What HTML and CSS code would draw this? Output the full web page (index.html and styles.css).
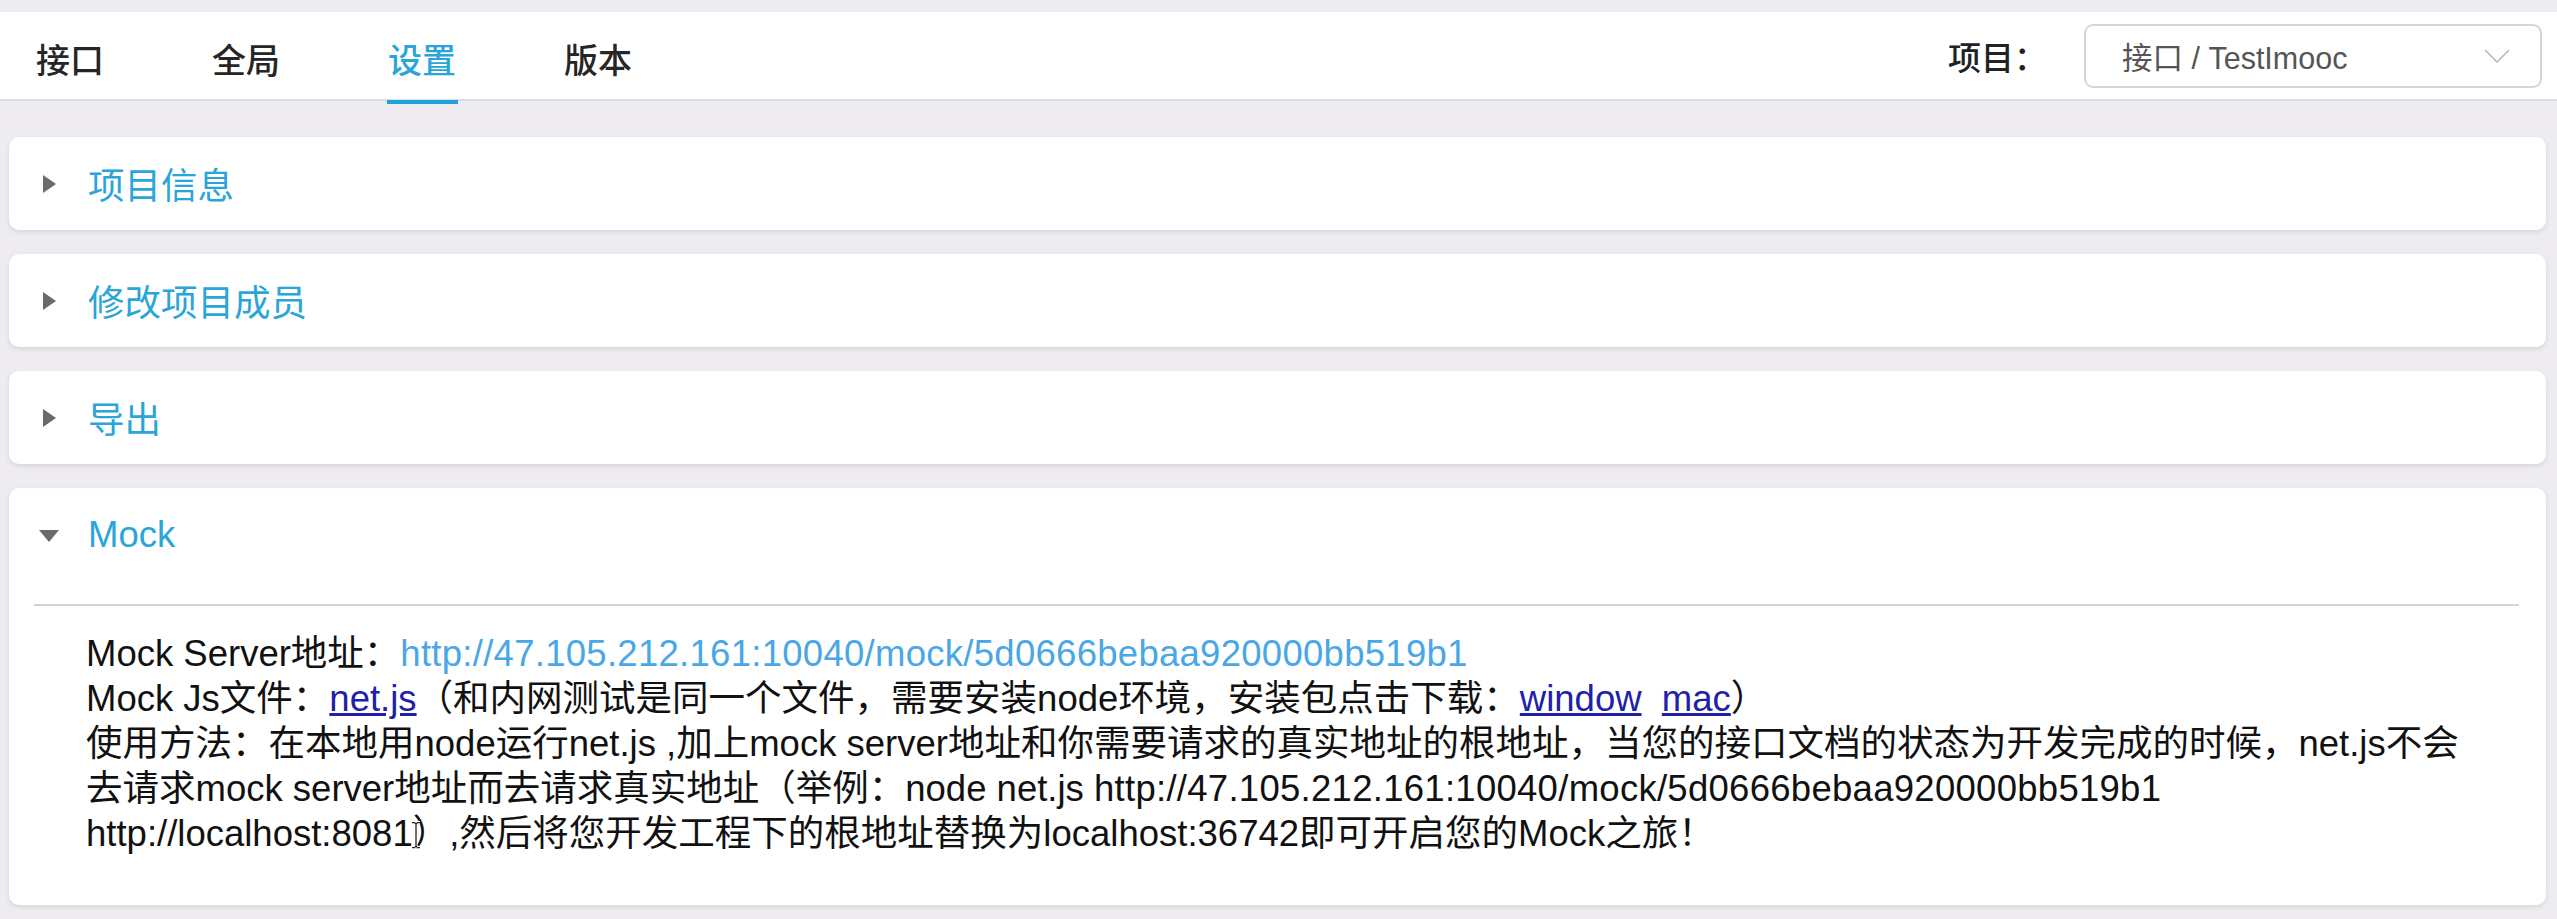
FILE: index.html
```html
<!DOCTYPE html>
<html lang="zh-CN">
<head>
<meta charset="utf-8">
<title>设置</title>
<link rel="stylesheet" href="styles.css">
</head>
<body>
<header class="topbar">
  <nav class="tabs">
    <a class="tab">接口</a>
    <a class="tab">全局</a>
    <a class="tab active">设置</a>
    <a class="tab">版本</a>
  </nav>
  <div class="project">
    <span class="project-label">项目：</span>
    <div class="select">
      <span class="select-value">接口 / TestImooc</span>
      <svg class="chevron" width="26" height="14" viewBox="0 0 26 14"><polyline points="1,1 13,13 25,1" fill="none" stroke="#b9b9bd" stroke-width="1.6"/></svg>
    </div>
  </div>
</header>
<main class="panels">
  <section class="panel">
    <div class="panel-head"><span class="arrow-box"><span class="arrow"></span></span><span class="panel-title">项目信息</span></div>
  </section>
  <section class="panel">
    <div class="panel-head"><span class="arrow-box"><span class="arrow"></span></span><span class="panel-title">修改项目成员</span></div>
  </section>
  <section class="panel">
    <div class="panel-head"><span class="arrow-box"><span class="arrow"></span></span><span class="panel-title">导出</span></div>
  </section>
  <section class="panel open">
    <div class="panel-head"><span class="arrow-box"><span class="arrow"></span></span><span class="panel-title">Mock</span></div>
    <div class="panel-body">
      <p class="mock-text">Mock Server地址：<span class="mock-url">http://47.105.212.161:10040/mock/5d0666bebaa920000bb519b1</span></p>
      <p class="mock-text">Mock Js文件：<a class="link">net.js</a>（和内网测试是同一个文件，需要安装node环境，安装包点击下载：<a class="link">window</a>&nbsp; <a class="link">mac</a>）</p>
      <p class="mock-text">使用方法：在本地用node运行net.js ,加上mock server地址和你需要请求的真实地址的根地址，当您的接口文档的状态为开发完成的时候，net.js不会<br>去请求mock server地址而去请求真实地址（举例：node net.js <span class="url-text">http://47.105.212.161:10040/mock/5d0666bebaa920000bb519b1</span><br>http://localhost:8081<span class="cursor-host">）<svg class="ibeam" width="12" height="28" viewBox="0 0 12 28"><path d="M2 1.5 H4.5 L6 3 L7.5 1.5 H10 M6 3 V25 M2 26.5 H4.5 L6 25 L7.5 26.5 H10" fill="none" stroke="#ffffff" stroke-width="3"/><path d="M2 1.5 H4.5 L6 3 L7.5 1.5 H10 M6 3 V25 M2 26.5 H4.5 L6 25 L7.5 26.5 H10" fill="none" stroke="#222222" stroke-width="1.3"/></svg></span>,然后将您开发工程下的根地址替换为localhost:36742即可开启您的Mock之旅！</p>
    </div>
  </section>
</main>
</body>
</html>
```

FILE: styles.css
```css
html, body {
  margin: 0;
}

body {
  background: #eeecf0;
  padding-top: 12px;
  height: 919px;
  box-sizing: border-box;
  overflow: hidden;
  font-family: "Liberation Sans", "Noto Sans CJK SC", sans-serif;
}

.topbar {
  height: 87px;
  background: #ffffff;
  border-bottom: 2px solid #dcdce3;
  display: flex;
  justify-content: space-between;
  align-items: stretch;
  padding: 0 15px 0 36px;
}

.tabs {
  display: flex;
  gap: 108px;
}

.tab {
  position: relative;
  display: flex;
  align-items: center;
  padding-top: 5px;
  font-size: 34px;
  font-weight: 500;
  color: #262626;
  text-decoration: none;
}

.tab.active {
  color: #2aa5d8;
}

.tab.active::after {
  content: "";
  position: absolute;
  left: -1px;
  right: -2px;
  bottom: -5px;
  height: 4px;
  background: #1fa2d9;
}

.project {
  display: flex;
  align-items: center;
  gap: 37px;
}

.project-label {
  font-size: 33px;
  font-weight: 500;
  color: #222222;
}

.select {
  width: 458px;
  height: 64px;
  box-sizing: border-box;
  border: 2px solid #d6d6da;
  border-radius: 9px;
  display: flex;
  align-items: center;
  justify-content: space-between;
  padding: 0 30px 0 36px;
  font-size: 30.5px;
  color: #555555;
}

.chevron {
  display: block;
}

.panels {
  display: flex;
  flex-direction: column;
  gap: 24px;
  padding: 36px 11px 0 9px;
}

.panel {
  background: #ffffff;
  border-radius: 10px;
  box-shadow: 0 2px 5px rgba(0, 0, 0, 0.1);
}

.panel-head {
  height: 93px;
  display: flex;
  align-items: center;
  padding-left: 29px;
  gap: 28px;
}

.arrow-box {
  width: 22px;
  height: 20px;
  display: flex;
  align-items: center;
  justify-content: center;
}

.arrow {
  width: 0;
  height: 0;
  border-left: 13px solid #6a6a6a;
  border-top: 9px solid transparent;
  border-bottom: 9px solid transparent;
}

.panel.open .arrow {
  border-left: 10px solid transparent;
  border-right: 10px solid transparent;
  border-top: 12px solid #6a6a6a;
  border-bottom: 0;
  margin-top: 2px;
}

.panel-title {
  font-size: 36.5px;
  color: #2aa5d8;
}

.panel-body {
  margin: 23px 27px 0 25px;
  border-top: 2px solid #d3d3d6;
  padding: 25px 0 49px 52px;
}

.mock-text {
  margin: 0;
  font-size: 36.5px;
  line-height: 45px;
  color: #111111;
  white-space: nowrap;
}

.mock-url {
  color: #4aa7e6;
  letter-spacing: 0.28px;
}

.url-text {
  letter-spacing: 0.28px;
}

.link {
  color: #2020a8;
  text-decoration: underline;
}

.cursor-host {
  position: relative;
}

.ibeam {
  position: absolute;
  left: -3px;
  top: 50%;
  transform: translateY(-46%);
}
```
